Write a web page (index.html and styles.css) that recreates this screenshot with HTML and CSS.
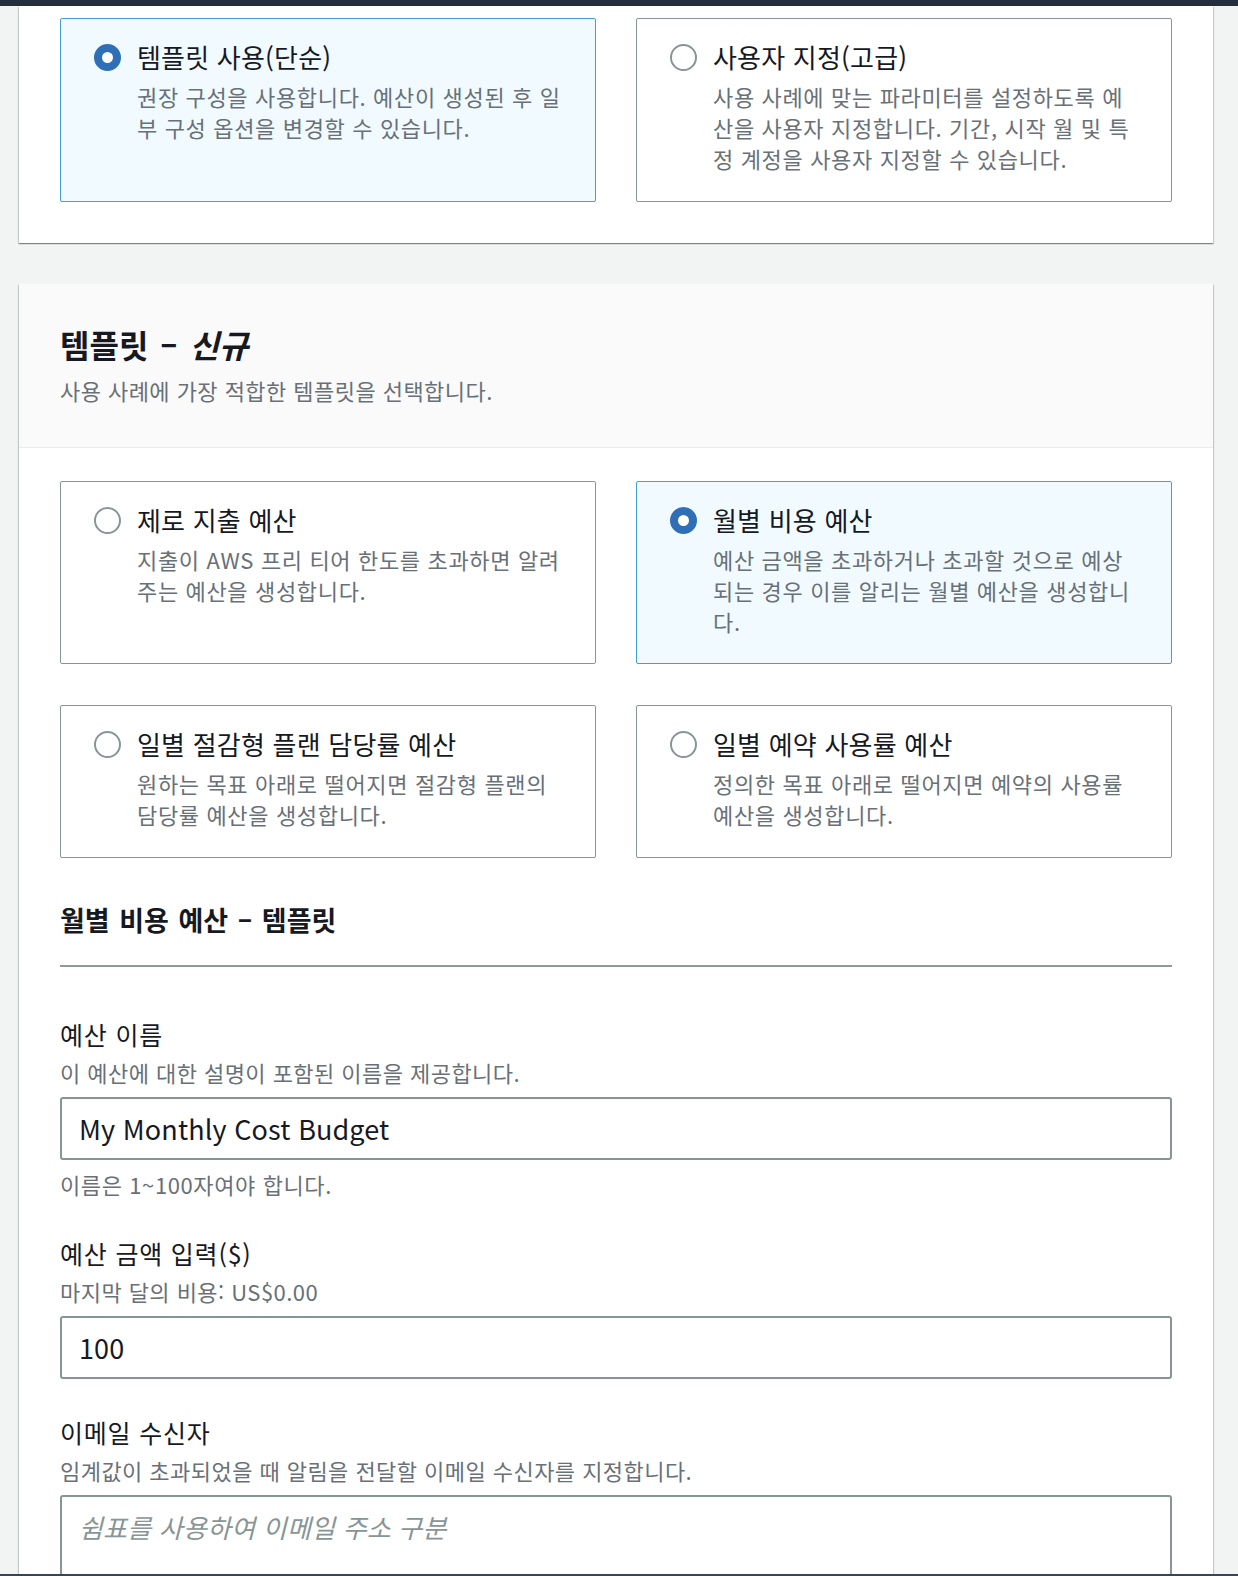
FILE: index.html
```html
<!DOCTYPE html>
<html lang="ko">
<head>
<meta charset="utf-8">
<title>예산 생성</title>
<link rel="stylesheet" href="styles.css">
</head>
<body>
<div class="topbar"></div>
<main class="page">
  <section class="panel panel-first">
    <div class="tiles">
      <label class="tile selected">
        <span class="radio checked"></span>
        <span class="tile-text">
          <span class="tile-title">템플릿 사용(단순)</span>
          <span class="tile-desc">권장 구성을 사용합니다. 예산이 생성된 후 일부 구성 옵션을 변경할 수 있습니다.</span>
        </span>
      </label>
      <label class="tile">
        <span class="radio"></span>
        <span class="tile-text">
          <span class="tile-title">사용자 지정(고급)</span>
          <span class="tile-desc">사용 사례에 맞는 파라미터를 설정하도록 예산을 사용자 지정합니다. 기간, 시작 월 및 특정 계정을 사용자 지정할 수 있습니다.</span>
        </span>
      </label>
    </div>
  </section>

  <section class="panel panel-second">
    <header class="panel-header">
      <h2 class="panel-title">템플릿 – <i>신규</i></h2>
      <p class="panel-sub">사용 사례에 가장 적합한 템플릿을 선택합니다.</p>
    </header>
    <div class="panel-body">
      <div class="tiles">
        <label class="tile">
          <span class="radio"></span>
          <span class="tile-text">
            <span class="tile-title">제로 지출 예산</span>
            <span class="tile-desc">지출이 AWS 프리 티어 한도를 초과하면 알려주는 예산을 생성합니다.</span>
          </span>
        </label>
        <label class="tile selected">
          <span class="radio checked"></span>
          <span class="tile-text">
            <span class="tile-title">월별 비용 예산</span>
            <span class="tile-desc">예산 금액을 초과하거나 초과할 것으로 예상되는 경우 이를 알리는 월별 예산을 생성합니다.</span>
          </span>
        </label>
        <label class="tile">
          <span class="radio"></span>
          <span class="tile-text">
            <span class="tile-title">일별 절감형 플랜 담당률 예산</span>
            <span class="tile-desc">원하는 목표 아래로 떨어지면 절감형 플랜의 담당률 예산을 생성합니다.</span>
          </span>
        </label>
        <label class="tile">
          <span class="radio"></span>
          <span class="tile-text">
            <span class="tile-title">일별 예약 사용률 예산</span>
            <span class="tile-desc">정의한 목표 아래로 떨어지면 예약의 사용률 예산을 생성합니다.</span>
          </span>
        </label>
      </div>

      <h3 class="section-title">월별 비용 예산 – 템플릿</h3>

      <div class="field">
        <div class="field-label">예산 이름</div>
        <div class="field-desc">이 예산에 대한 설명이 포함된 이름을 제공합니다.</div>
        <div class="input">My Monthly Cost Budget</div>
        <div class="field-note">이름은 1~100자여야 합니다.</div>
      </div>

      <div class="field">
        <div class="field-label">예산 금액 입력($)</div>
        <div class="field-desc">마지막 달의 비용: US$0.00</div>
        <div class="input">100</div>
      </div>

      <div class="field">
        <div class="field-label">이메일 수신자</div>
        <div class="field-desc">임계값이 초과되었을 때 알림을 전달할 이메일 수신자를 지정합니다.</div>
        <div class="textarea"><span class="placeholder">쉼표를 사용하여 이메일 주소 구분</span></div>
      </div>
    </div>
  </section>
</main>
<div class="footer-edge"></div>
</body>
</html>
```

FILE: styles.css
```css
html, body {
  margin: 0;
  padding: 0;
}
body {
  background: #f2f3f3;
  color: #16191f;
  font-family: "Noto Sans CJK KR", "Noto Sans", sans-serif;
  height: 1576px;
  overflow: hidden;
  word-break: break-all;
}
.topbar {
  height: 6px;
  background: #232f3e;
}
.page {
  width: 1194px;
  margin-left: 19px;
}
.panel {
  background: #ffffff;
  box-shadow: 0 1px 1px 0 rgba(0, 28, 36, 0.3), 1px 1px 1px 0 rgba(0, 28, 36, 0.15), -1px 1px 1px 0 rgba(0, 28, 36, 0.15);
}
.panel-first {
  padding: 12px 41px 41px;
}
.panel-second {
  margin-top: 41px;
}
.tiles {
  display: grid;
  grid-template-columns: 1fr 1fr;
  column-gap: 40px;
  row-gap: 41px;
}
.tile {
  display: flex;
  align-items: flex-start;
  gap: 16px;
  border: 1px solid #879596;
  border-radius: 2px;
  padding: 20px 34px 26px 33px;
  background: #ffffff;
}
.tile.selected {
  border-color: #44a1cd;
  background: #f1faff;
}
.radio {
  flex: none;
  width: 27px;
  height: 27px;
  margin-top: 5px;
  box-sizing: border-box;
  border: 2px solid #879596;
  border-radius: 50%;
  background: #ffffff;
}
.radio.checked {
  border: 8px solid #2e6fb7;
  background: #ffffff;
}
.tile-text {
  display: flex;
  flex-direction: column;
  min-width: 0;
}
.tile-title {
  font-size: 26px;
  line-height: 36px;
  letter-spacing: 0.2px;
  font-weight: 400;
  color: #16191f;
}
.tile-desc {
  margin-top: 6px;
  font-size: 22px;
  line-height: 31.2px;
  letter-spacing: 0.65px;
  color: #687078;
}
.panel-header {
  background: #fafafa;
  border-bottom: 1px solid #eaeded;
  padding: 40px 41px 41px;
}
.panel-title {
  margin: 0;
  font-size: 32px;
  line-height: 40px;
  font-weight: 700;
  word-spacing: 3px;
}
.panel-sub {
  margin: 11px 0 0;
  font-size: 22px;
  line-height: 31px;
  letter-spacing: 0.45px;
  color: #687078;
}
.panel-body {
  padding: 33px 41px 41px;
}
.section-title {
  margin: 45px 0 0;
  padding-bottom: 28px;
  border-bottom: 2px solid #8d9a9b;
  font-size: 27px;
  line-height: 34px;
  font-weight: 700;
  word-spacing: 2px;
}
.field {
  margin-top: 36px;
}
.section-title + .field {
  margin-top: 50px;
}
.field-label {
  font-size: 25px;
  line-height: 34px;
  letter-spacing: 0.8px;
}
.field-desc {
  margin-top: 6px;
  font-size: 22px;
  line-height: 31px;
  letter-spacing: 0.45px;
  color: #687078;
}
.input, .textarea {
  margin-top: 9px;
  box-sizing: border-box;
  border: 2px solid #879596;
  border-radius: 3px;
  padding: 0 17px;
  font-size: 27px;
  background: #ffffff;
}
.input {
  height: 63px;
  line-height: 59px;
  letter-spacing: 0.1px;
}
.textarea {
  height: 120px;
  padding-top: 10px;
  line-height: 40px;
}
.placeholder {
  font-style: italic;
  font-size: 26px;
  letter-spacing: 0.2px;
  color: #879596;
}
.field-note {
  margin-top: 9px;
  font-size: 22px;
  line-height: 31px;
  letter-spacing: 0.6px;
  color: #687078;
}
.footer-edge {
  position: fixed;
  left: 0;
  right: 0;
  bottom: 0;
  height: 2px;
  background: #3b4451;
}
```
